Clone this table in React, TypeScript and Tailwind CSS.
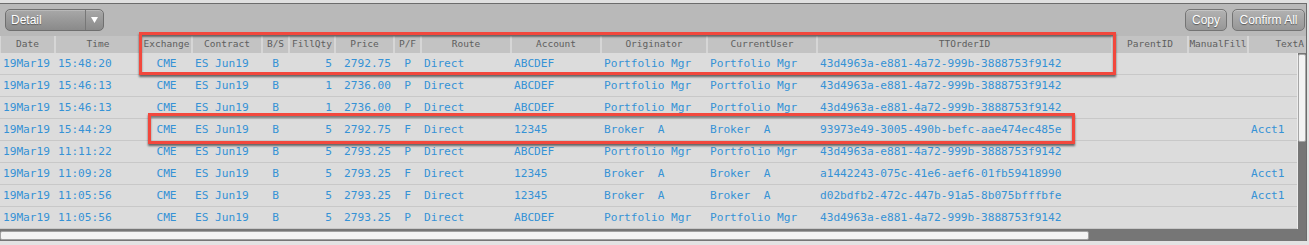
import type { CSSProperties } from "react";

type Align = "left" | "center" | "right";

interface Column {
  key: string;
  label: string;
  width: number;
  align: Align;
}

const columns: Column[] = [
  { key: "date", label: "Date", width: 55, align: "left" },
  { key: "time", label: "Time", width: 86, align: "left" },
  { key: "exchange", label: "Exchange", width: 51, align: "center" },
  { key: "contract", label: "Contract", width: 70, align: "left" },
  { key: "bs", label: "B/S", width: 27, align: "center" },
  { key: "qty", label: "FillQty", width: 46, align: "right" },
  { key: "price", label: "Price", width: 59, align: "right" },
  { key: "pf", label: "P/F", width: 27, align: "center" },
  { key: "route", label: "Route", width: 90, align: "left" },
  { key: "account", label: "Account", width: 90, align: "left" },
  { key: "originator", label: "Originator", width: 106, align: "left" },
  { key: "user", label: "CurrentUser", width: 110, align: "left" },
  { key: "order", label: "TTOrderID", width: 295, align: "left" },
  { key: "parent", label: "ParentID", width: 76, align: "left" },
  { key: "manual", label: "ManualFill", width: 60, align: "left" },
];

const PM = "43d4963a-e881-4a72-999b-3888753f9142";

// 行データ
const rows: Record<string, string>[] = [
  { time: "15:48:20", qty: "5", price: "2792.75", pf: "P", account: "ABCDEF", who: "Portfolio Mgr", order: PM, text: "" },
  { time: "15:46:13", qty: "1", price: "2736.00", pf: "P", account: "ABCDEF", who: "Portfolio Mgr", order: PM, text: "" },
  { time: "15:46:13", qty: "1", price: "2736.00", pf: "P", account: "ABCDEF", who: "Portfolio Mgr", order: PM, text: "" },
  { time: "15:44:29", qty: "5", price: "2792.75", pf: "F", account: "12345", who: "Broker  A", order: "93973e49-3005-490b-befc-aae474ec485e", text: "Acct1" },
  { time: "11:11:22", qty: "5", price: "2793.25", pf: "P", account: "ABCDEF", who: "Portfolio Mgr", order: PM, text: "" },
  { time: "11:09:28", qty: "5", price: "2793.25", pf: "F", account: "12345", who: "Broker  A", order: "a1442243-075c-41e6-aef6-01fb59418990", text: "Acct1" },
  { time: "11:05:56", qty: "5", price: "2793.25", pf: "F", account: "12345", who: "Broker  A", order: "d02bdfb2-472c-447b-91a5-8b075bfffbfe", text: "Acct1" },
  { time: "11:05:56", qty: "5", price: "2793.25", pf: "P", account: "ABCDEF", who: "Portfolio Mgr", order: PM, text: "" },
].map((r) => ({
  date: "19Mar19",
  exchange: "CME",
  contract: "ES Jun19",
  bs: "B",
  route: "Direct",
  originator: r.who,
  user: r.who,
  parent: "",
  manual: "",
  ...r,
}));

const alignClass: Record<Align, string> = {
  left: "justify-start",
  center: "justify-center",
  right: "justify-end",
};

function ToolButton({ label, width }: { label: string; width: string }) {
  return (
    <div
      className={`${width} h-[22px] flex items-center justify-center rounded-[5px] border border-[#747474] bg-gradient-to-b from-[#b2b2b2] to-[#979797] text-[12px] text-white [text-shadow:0_1px_1px_rgba(0,0,0,0.45)] shadow-[inset_0_1px_0_rgba(255,255,255,0.25)]`}
    >
      {label}
    </div>
  );
}

function Highlight({ style }: { style: CSSProperties }) {
  return (
    <div
      className="absolute border-[3px] border-[#f2483d] shadow-[0_2px_2px_rgba(0,0,0,0.55),inset_0_2px_2px_rgba(0,0,0,0.45)] pointer-events-none"
      style={style}
    />
  );
}

export default function App() {
  return (
    <div className="relative w-[1309px] h-[245px] overflow-hidden bg-[#e3e3e3] font-['Liberation_Sans',Arial,sans-serif]">
      {/* 上端 */}
      <div className="h-[3px] bg-[#e0e0e0]" />

      <div className="w-[1307px] border-t border-r border-[#6c6c6c] bg-[#b9b9b9]">
        {/* ツールバー */}
        <div className="h-[32px] flex items-center justify-between pl-[5px] pr-[1px]">
          <div className="w-[99px] h-[22px] flex items-center rounded-[5px] border border-[#6f6f6f] bg-gradient-to-b from-[#a8a8a8] to-[#8a8a8a] shadow-[inset_0_1px_0_rgba(255,255,255,0.2)]">
            <span className="flex-1 pl-[5px] text-[12px] text-white [text-shadow:0_1px_1px_rgba(0,0,0,0.4)]">
              Detail
            </span>
            <div className="w-[18px] h-full border-l border-[#777] flex items-center justify-center">
              <svg width="7" height="6" viewBox="0 0 7 6">
                <path d="M0 0 L7 0 L3.5 6 Z" fill="#fff" />
              </svg>
            </div>
          </div>
          <div className="flex gap-[5px]">
            <ToolButton label="Copy" width="w-[42px]" />
            <ToolButton label="Confirm All" width="w-[73px]" />
          </div>
        </div>

        {/* ヘッダー */}
        <div className="h-[17px] flex bg-[#d6d6d6] font-['DejaVu_Sans_Mono',monospace] text-[9.5px] text-[#5e5e5e]">
          {columns.map((c) => (
            <div key={c.key} className="h-full px-[1px]" style={{ width: c.width }}>
              <div className="h-full bg-[#c3c3c3] flex items-center justify-center">{c.label}</div>
            </div>
          ))}
          <div className="h-full pl-[1px] w-[58px]">
            <div className="h-full bg-[#c3c3c3] flex items-center justify-end pr-[2px]">TextA</div>
          </div>
        </div>

        {/* 本体 + 縦スクロール */}
        <div className="flex">
          <div className="w-[1298px] border-r border-[#ececec] font-['DejaVu_Sans_Mono',monospace] text-[11.15px] text-[#3592d6]">
            {rows.map((r, i) => (
              <div key={i} className="h-[22px] flex bg-[#dcdcdc] border-b border-[#c8c8c8]">
                {columns.map((c) => (
                  <div
                    key={c.key}
                    className={`h-full flex items-center whitespace-pre px-[3px] pt-[1px] ${alignClass[c.align]}`}
                    style={{ width: c.width }}
                  >
                    {r[c.key]}
                  </div>
                ))}
                <div className="flex-1 h-full flex items-center whitespace-pre px-[3px] pt-[1px]">{r.text}</div>
              </div>
            ))}
          </div>
          <div className="w-[8px] bg-[#767676] pt-[1px]">
            <div className="h-[88px] bg-[#f3f3f3] border border-[#a6a6a6] rounded-[2px]" />
          </div>
        </div>

        {/* 横スクロール */}
        <div className="h-[12px] bg-[#767676] pt-[2px] pb-[1px]">
          <div className="w-[1089px] h-full bg-[#f3f3f3] border border-[#a0a0a0] rounded-[2px]" />
        </div>
      </div>

      {/* 注釈ボックス */}
      <Highlight style={{ left: 139, top: 32, width: 977, height: 43 }} />
      <Highlight style={{ left: 148, top: 113, width: 927, height: 31 }} />
    </div>
  );
}
